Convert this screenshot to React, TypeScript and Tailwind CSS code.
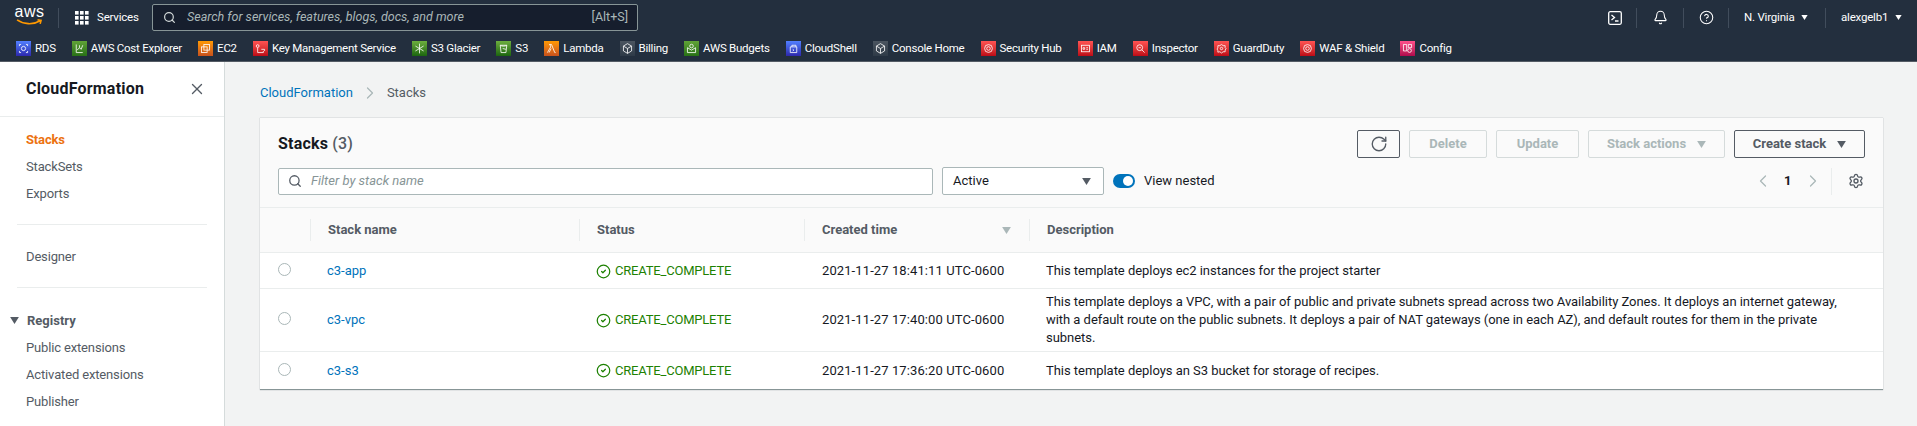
import React from "react";
import { Search, X, RotateCw, ChevronLeft, ChevronRight, Settings, CircleCheck, Bell, CircleHelp } from "lucide-react";

const Caret = ({ className = "" }: { className?: string }) => (
  <svg viewBox="0 0 10 8" className={className} fill="currentColor"><path d="M0 0h10L5 8z" /></svg>
);

const glyphs: Record<string, React.ReactNode> = {
  rds: <><circle cx="8" cy="8" r="2.6" /><path d="M3 3h2M11 3h2M3 13h2M11 13h2M3 3v2M13 3v2M3 13v-2M13 13v-2" /></>,
  cost: <path d="M4 3v10h8M5 10l3-3 2 2 2-5M8 7V4" />,
  ec2: <><rect x="6" y="3" width="7" height="7" /><rect x="3" y="6" width="7" height="7" /></>,
  kms: <><circle cx="4.5" cy="5" r="1.7" /><path d="M4.5 7v6h7v-2M9 9h4v2" /></>,
  glacier: <path d="M8 2v12M3 5l10 6M13 5L3 11" />,
  s3: <><path d="M4 4h8l-1 9H5z" /><path d="M4 4c2 1.5 6 1.5 8 0M7 8l4 1" /></>,
  lambda: <path d="M3 13l4-7-1-3H5M6 3h2l4 10h1M7.500 8L5 13" />,
  box: <path d="M8 2l5 3v6l-5 3-5-3V5zM3 5l5 3 5-3M8 8v6" />,
  budgets: <><path d="M3 7l5 3 5-3v6H3z" /><circle cx="8" cy="5" r="2.200" /></>,
  shell: <><path d="M4 6h8v7H4z" /><path d="M6 6V4h5v2M7 9l1.500 1L7 11" /></>,
  hub: <><circle cx="8" cy="8" r="4.800" /><circle cx="8" cy="8" r="2.200" /></>,
  iam: <><rect x="3" y="4" width="10" height="8" /><path d="M5 7h2v2H5zM9 7h2M9 9h2" /></>,
  inspector: <><circle cx="7" cy="7" r="3.600" /><path d="M9.500 9.500L13 13M5.500 7h3" /></>,
  guard: <><path d="M8 3l2 1.500 2.500 0 0 2.500 1 1-1 2v2L10 12l-2 1.500L6 12l-2.500.500v-2l-1-2 1-1V4.500L6 4.500z" /><circle cx="8" cy="8" r="1.500" /></>,
  config: <><path d="M3 3h4v8H3zM9 3h4v4H9z" /><circle cx="10.500" cy="10.500" r="2.300" /></>,
};

const shortcuts = [
  { label: "RDS", bg: "bg-linear-to-t from-[#2e27ad] to-[#527fff]", g: "rds" },
  { label: "AWS Cost Explorer", bg: "bg-linear-to-t from-[#277116] to-[#60a337]", g: "cost" },
  { label: "EC2", bg: "bg-linear-to-t from-[#c8511b] to-[#ff9900]", g: "ec2" },
  { label: "Key Management Service", bg: "bg-linear-to-t from-[#bd0816] to-[#ff5252]", g: "kms" },
  { label: "S3 Glacier", bg: "bg-linear-to-t from-[#1b660f] to-[#6cae3e]", g: "glacier" },
  { label: "S3", bg: "bg-linear-to-t from-[#1b660f] to-[#6cae3e]", g: "s3" },
  { label: "Lambda", bg: "bg-linear-to-t from-[#c8511b] to-[#ff9900]", g: "lambda" },
  { label: "Billing", bg: "bg-linear-to-t from-[#2e3a47] to-[#4b5560]", g: "box" },
  { label: "AWS Budgets", bg: "bg-linear-to-t from-[#277116] to-[#60a337]", g: "budgets" },
  { label: "CloudShell", bg: "bg-linear-to-t from-[#2e27ad] to-[#527fff]", g: "shell" },
  { label: "Console Home", bg: "bg-linear-to-t from-[#2e3a47] to-[#4b5560]", g: "box" },
  { label: "Security Hub", bg: "bg-linear-to-t from-[#bd0816] to-[#ff5252]", g: "hub" },
  { label: "IAM", bg: "bg-linear-to-t from-[#bd0816] to-[#ff5252]", g: "iam" },
  { label: "Inspector", bg: "bg-linear-to-t from-[#bd0816] to-[#ff5252]", g: "inspector" },
  { label: "GuardDuty", bg: "bg-linear-to-t from-[#bd0816] to-[#ff5252]", g: "guard" },
  { label: "WAF & Shield", bg: "bg-linear-to-t from-[#bd0816] to-[#ff5252]", g: "hub" },
  { label: "Config", bg: "bg-linear-to-t from-[#b0084d] to-[#ff4f8b]", g: "config" },
];

const rows = [
  { name: "c3-app", time: "2021-11-27 18:41:11 UTC-0600", desc: "This template deploys ec2 instances for the project starter", h: "h-[36px] pt-[1px]" },
  { name: "c3-vpc", time: "2021-11-27 17:40:00 UTC-0600", desc: "This template deploys a VPC, with a pair of public and private subnets spread across two Availability Zones. It deploys an internet gateway, with a default route on the public subnets. It deploys a pair of NAT gateways (one in each AZ), and default routes for them in the private subnets.", h: "h-[63px]" },
  { name: "c3-s3", time: "2021-11-27 17:36:20 UTC-0600", desc: "This template deploys an S3 bucket for storage of recipes.", h: "h-[37px]" },
];

const gridCols = "grid grid-cols-[50px_269px_225px_225px_1fr]";

function TopBar() {
  return (
    <div className="h-[35px] flex items-center text-white pl-[15px] pr-[15px]">
      <div className="w-[29px] h-[24px] flex flex-col items-center relative">
        <span className="text-[16px] leading-[16px] font-['Liberation_Sans',sans-serif] tracking-[0.5px] -mt-[2px]">aws</span>
        <svg viewBox="0 0 30 9" className="w-[29px] h-[8px] text-[#ff9900] -mt-[1px]" fill="none" stroke="currentColor" strokeWidth="1.800"><path d="M1 1c7 5 18 6 26 1M24 1l4 .500-1 4" /></svg>
      </div>
      <div className="w-px h-[20px] bg-[#414d5c] ml-[14px]" />
      <svg viewBox="0 0 14 14" className="w-[14px] h-[14px] ml-[16px]" fill="currentColor">
        {[0, 5, 10].flatMap((y) => [0, 5, 10].map((x) => <rect key={`${x}-${y}`} x={x} y={y} width="3.600" height="3.600" />))}
      </svg>
      <span className="ml-[8px] text-[11.500px] tracking-[-0.2px] w-[40px] whitespace-nowrap">Services</span>
      <div className="ml-[15px] w-[486px] h-[27px] bg-[#161e2d] border border-[#879596] rounded-[2px] flex items-center pl-[10px] pr-[9px]">
        <Search className="w-[13px] h-[13px] text-[#d5dbdb]" strokeWidth={2.200} />
        <span className="ml-[11px] text-[12.500px] italic text-[#aab7b8]">Search for services, features, blogs, docs, and more</span>
        <span className="ml-auto text-[12.500px] text-[#aab7b8]">[Alt+S]</span>
      </div>
      <div className="ml-auto flex items-center">
        <svg viewBox="0 0 14 14" className="w-[14px] h-[14px]" fill="none" stroke="currentColor" strokeWidth="1.300"><rect x=".700" y=".700" width="12.600" height="12.600" rx="1.500" /><path d="M3.500 4l3 2.500-3 2.500M7 10h3.500" /></svg>
        <div className="w-px h-[20px] bg-[#414d5c] ml-[14px]" />
        <Bell className="w-[15px] h-[15px] ml-[16px]" strokeWidth={1.700} />
        <div className="w-px h-[20px] bg-[#414d5c] ml-[15px]" />
        <CircleHelp className="w-[15px] h-[15px] ml-[15px]" strokeWidth={1.700} />
        <div className="w-px h-[20px] bg-[#414d5c] ml-[14px]" />
        <span className="ml-[15px] text-[11.500px] tracking-[-0.2px] w-[51px] whitespace-nowrap">N. Virginia</span>
        <Caret className="w-[7px] h-[5px] ml-[6px]" />
        <div className="w-px h-[20px] bg-[#414d5c] ml-[17px]" />
        <span className="ml-[15px] text-[11.500px] tracking-[-0.2px] w-[48px] whitespace-nowrap">alexgelb1</span>
        <Caret className="w-[7px] h-[5px] ml-[6px]" />
      </div>
    </div>
  );
}

function ShortcutBar() {
  return (
    <div className="h-[27px] flex items-center gap-[16.100px] pl-[16px] text-white border-b border-[#545b64]">
      {shortcuts.map((s) => (
        <div key={s.label} className="flex items-center gap-[4px]">
          <span className={`w-[15px] h-[15px] flex items-center justify-center ${s.bg}`}>
            <svg viewBox="0 0 16 16" className="w-[13px] h-[13px]" fill="none" stroke="white" strokeWidth="1">{glyphs[s.g]}</svg>
          </span>
          <span className="text-[11.500px] tracking-[-0.25px] leading-[15px] whitespace-nowrap">{s.label}</span>
        </div>
      ))}
    </div>
  );
}

function Sidebar() {
  const link = "h-[27px] flex items-center pl-[26px] text-[13px] tracking-[-0.15px] text-[#545b64]";
  return (
    <aside className="w-[225px] shrink-0 bg-white border-r border-[#d5dbdb] overflow-hidden">
      <div className="h-[55px] border-b border-[#eaeded] flex items-center justify-between pl-[26px] pr-[18px]">
        <span className="text-[16px] font-bold text-[#16191f] tracking-[0.2px]">CloudFormation</span>
        <X className="w-[18px] h-[18px] text-[#545b64]" strokeWidth={1.800} />
      </div>
      <div className="pt-[9px]">
        <div className={`${link} !text-[#ec7211] font-bold`}>Stacks</div>
        <div className={link}>StackSets</div>
        <div className={link}>Exports</div>
        <div className="h-px bg-[#eaeded] mx-[17px] mt-[17px]" />
        <div className={`${link} mt-[18px]`}>Designer</div>
        <div className="h-px bg-[#eaeded] mx-[17px] mt-[17px]" />
        <div className="mt-[19px] h-[27px] flex items-center pl-[10px] text-[13px] font-bold text-[#545b64]">
          <Caret className="w-[9px] h-[7px]" />
          <span className="ml-[8px]">Registry</span>
        </div>
        <div className={link}>Public extensions</div>
        <div className={link}>Activated extensions</div>
        <div className={link}>Publisher</div>
      </div>
    </aside>
  );
}

const disabledBtn = "h-[28px] border border-[#d5dbdb] rounded-[2px] flex items-center justify-center text-[13px] font-bold text-[#aab7b8]";
const enabledBtn = "h-[28px] border border-[#545b64] rounded-[2px] flex items-center justify-center text-[13px] font-bold text-[#545b64]";

function CardHead() {
  return (
    <div className="h-[90px] bg-[#fafafa] border-b border-[#eaeded] pl-[18px] pr-[18px] pt-[12px]">
      <div className="flex items-center h-[28px]">
        <h1 className="text-[16px] font-bold text-[#16191f] tracking-[0.2px]">Stacks <span className="font-medium text-[#545b64]">(3)</span></h1>
        <div className="ml-auto flex gap-[9px]">
          <button className={`${enabledBtn} w-[43px]`}><RotateCw className="w-[18px] h-[18px]" strokeWidth={1.800} /></button>
          <button className={`${disabledBtn} w-[78px]`}>Delete</button>
          <button className={`${disabledBtn} w-[83px]`}>Update</button>
          <button className={`${disabledBtn} w-[137px] gap-[11px]`}>Stack actions<Caret className="w-[9px] h-[7px]" /></button>
          <button className={`${enabledBtn} w-[131px] gap-[11px]`}>Create stack<Caret className="w-[9px] h-[7px]" /></button>
        </div>
      </div>
      <div className="flex items-center mt-[9px] h-[28px]">
        <div className="w-[655px] h-[27px] bg-white border border-[#aab7b8] rounded-[2px] flex items-center pl-[9px]">
          <Search className="w-[14px] h-[14px] text-[#545b64]" strokeWidth={2.200} />
          <span className="ml-[9px] text-[13px] italic text-[#879596]">Filter by stack name</span>
        </div>
        <div className="ml-[9px] w-[162px] h-[28px] bg-white border border-[#aab7b8] rounded-[2px] flex items-center justify-between pl-[10px] pr-[12px]">
          <span className="text-[13px] text-[#16191f]">Active</span>
          <Caret className="w-[9px] h-[7px] text-[#545b64]" />
        </div>
        <div className="ml-[9px] w-[22px] h-[14px] rounded-full bg-[#0073bb] flex items-center justify-end pr-[2px]">
          <span className="w-[10px] h-[10px] rounded-full bg-white" />
        </div>
        <span className="ml-[9px] text-[13px] text-[#16191f]">View nested</span>
        <div className="ml-auto flex items-center">
          <ChevronLeft className="w-[20px] h-[20px] text-[#aab7b8]" strokeWidth={1.500} />
          <span className="ml-[11px] text-[13px] font-bold text-[#16191f] w-[6px]">1</span>
          <ChevronRight className="ml-[13px] w-[20px] h-[20px] text-[#aab7b8]" strokeWidth={1.500} />
          <div className="ml-[8px] w-px h-[27px] bg-[#eaeded]" />
          <Settings className="ml-[16px] mr-[1px] w-[16px] h-[16px] text-[#545b64]" strokeWidth={2} />
        </div>
      </div>
    </div>
  );
}

function TableHead() {
  const th = "border-l border-[#eaeded] h-[22px] flex items-center text-[13px] font-bold text-[#545b64]";
  return (
    <div className={`${gridCols} h-[45px] bg-[#fafafa] border-b border-[#eaeded] items-center`}>
      <div />
      <div className={`${th} pl-[17px]`}>Stack name</div>
      <div className={`${th} pl-[17px]`}>Status</div>
      <div className={`${th} pl-[17px] pr-[18px] justify-between`}>Created time<Caret className="w-[9px] h-[7px] text-[#aab7b8]" /></div>
      <div className={`${th} pl-[17px]`}>Description</div>
    </div>
  );
}

function Row({ r, last }: { r: (typeof rows)[number]; last: boolean }) {
  return (
    <div className={`${gridCols} ${r.h} items-center text-[13px] leading-[18px] ${last ? "" : "border-b border-[#eaeded]"}`}>
      <div className="pl-[18px] flex items-center">
        <span className="w-[13px] h-[13px] rounded-full border border-[#aab7b8] bg-white -mt-[3px]" />
      </div>
      <a className="pl-[17px] text-[#0073bb]">{r.name}</a>
      <div className="pl-[17px] flex items-center gap-[4px] text-[#1d8102]">
        <CircleCheck className="w-[15px] h-[15px]" strokeWidth={2} />
        <span className="tracking-[-0.2px]">CREATE_COMPLETE</span>
      </div>
      <div className="pl-[18px] text-[#16191f] whitespace-nowrap tracking-[0.1px]">{r.time}</div>
      <div className="pl-[17px] pr-[30px] text-[#16191f] tracking-[-0.04px]">{r.desc}</div>
    </div>
  );
}

export default function App() {
  return (
    <div className="w-full h-[426px] overflow-hidden flex flex-col bg-[#f2f3f3] font-['Roboto',sans-serif]">
      <header className="bg-[#232f3e] shrink-0">
        <TopBar />
        <ShortcutBar />
      </header>
      <div className="flex flex-1 min-h-0">
        <Sidebar />
        <main className="flex-1 pl-[35px] pr-[34px] pt-[21px]">
          <nav className="flex items-center h-[20px] text-[13px]">
            <a className="text-[#0073bb]">CloudFormation</a>
            <ChevronRight className="mx-[7px] w-[20px] h-[20px] text-[#aab7b8]" strokeWidth={1.500} />
            <span className="text-[#545b64]">Stacks</span>
          </nav>
          <section className="mt-[15px] bg-white border-b border-[#879596] shadow-[0_0_1px_rgba(0,28,36,0.4)]">
            <CardHead />
            <TableHead />
            {rows.map((r, i) => <Row key={r.name} r={r} last={i === rows.length - 1} />)}
          </section>
        </main>
      </div>
    </div>
  );
}
